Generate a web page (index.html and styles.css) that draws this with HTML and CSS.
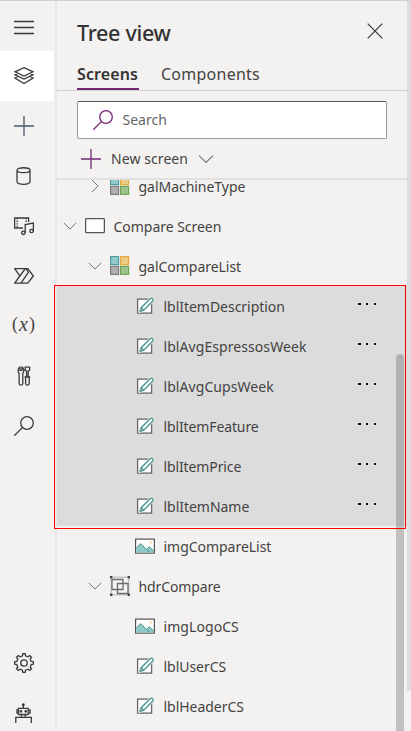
FILE: index.html
```html
<!DOCTYPE html>
<html lang="en">
<head>
<meta charset="utf-8">
<title>Tree view</title>
<link rel="stylesheet" href="styles.css">
</head>
<body>
<svg class="defs" width="0" height="0">
  <symbol id="label" viewBox="0 0 20 20">
    <rect x="2.6" y="3.1" width="14" height="14" fill="#fff" stroke="#666" stroke-width="1.3"/>
    <path d="M5.2 15.2 6.3 11.7 15.4 2.6Q16.7 1.7 17.9 2.9 18.7 4 17.8 5L8.7 14.1Z" fill="#fff" stroke="#eee" stroke-width="2.6"/>
    <path d="M5.2 15.2 6.3 11.7 15.4 2.6Q16.7 1.7 17.7 2.8 18.5 4 17.8 5L8.7 14.1ZM6.5 11.8 8.6 13.9" fill="#fff" stroke="#4b9692" stroke-width="1.3"/>
  </symbol>
  <symbol id="image" viewBox="0 0 20 20">
    <rect x=".6" y="3.1" width="18.8" height="14" fill="#fff" stroke="#555" stroke-width="1.2"/>
    <path d="M1.2 12.5 5.5 7.5 11.5 13.5 14.2 10.8 18.8 15V16.5H1.2Z" fill="#8ccac8"/>
    <path d="M1.2 12.5 5.5 7.5 14.5 16.5M11.5 13.5 14.2 10.8 18.8 15" fill="none" stroke="#4a8f8e"/>
    <rect x="15" y="5.5" width="1.3" height="2" fill="#e8b650"/>
  </symbol>
  <symbol id="gallery" viewBox="0 0 20 20">
    <g stroke-width="1.1">
    <rect x=".6" y=".6" width="8" height="8" fill="#90c9c9" stroke="#4a9797"/>
    <rect x="10.6" y=".6" width="8" height="8" fill="#eccb83" stroke="#e6a83b"/>
    <rect x=".6" y="10.4" width="8" height="8" fill="#b0b0b0" stroke="#777"/>
    <rect x="10.6" y="10.4" width="8" height="8" fill="#9fc38e" stroke="#68a04b"/>
    </g>
  </symbol>
  <symbol id="group" viewBox="0 0 20 20">
    <path d="M3 1.2H17M18.8 3V17M17 18.8H3M1.2 17V3" fill="none" stroke="#999" stroke-width=".7"/>
    <path d="M2 3.5H13V13.5H2ZM7.5 7.5H18V17.5H7.5Z" fill="none" stroke="#6c6c6c" stroke-width="1.3"/>
    <path d="M0 0H2.5V2.5H0ZM17.5 0H20V2.5H17.5ZM0 17.5H2.5V20H0ZM17.5 17.5H20V20H17.5Z" fill="#444"/>
  </symbol>
  <symbol id="down" viewBox="0 0 14 14"><path d="M.9 4 7 10 13.1 4" fill="none" stroke="#777" stroke-width="1"/></symbol>
  <symbol id="right" viewBox="0 0 14 14"><path d="M4 1 10 7 4 13" fill="none" stroke="#777" stroke-width="1"/></symbol>
  <symbol id="find" viewBox="0 0 20 20"><circle cx="13" cy="7" r="6.3"/><path d="M8.4 11.6.3 19.7"/></symbol>
  <symbol id="plus" viewBox="0 0 20 20"><path d="M0 10H20M10 0V20"/></symbol>
</svg>
<div class="app">
  <nav class="rail">
    <a class="item"><svg viewBox="0 0 20 20"><path d="M0 5.5H20M0 11.5H20M0 17.5H20"/></svg></a>
    <a class="item active"><svg viewBox="0 0 20 20"><path d="M10 1.6 19 5.8 10 10 1 5.8ZM3.8 7.4 1 8.8 10 13 19 8.8 16.2 7.4M3.8 10.5 1 12 10 17.5 19 12 16.2 10.5"/></svg></a>
    <a class="item"><svg class="steel"><use href="#plus"/></svg></a>
    <a class="item"><svg viewBox="0 0 20 20"><path d="M3 4.2C3 .9 16 .9 16 4.2V15.8C16 19.1 3 19.1 3 15.8ZM3 4.2C3 7.4 16 7.4 16 4.2"/></svg></a>
    <a class="item"><svg viewBox="0 0 20 20"><path d="M9 12H.6V2H14.6V6"/><path d="M3.2 2V12M12.2 2V6" stroke-dasharray="1.3 1.3"/><path d="M11.2 17V8.6L19.4 7V15"/><ellipse cx="9.4" cy="16.8" rx="1.8" ry="1.7"/><ellipse cx="17.6" cy="15" rx="1.8" ry="1.7"/></svg></a>
    <a class="item"><svg viewBox="0 0 20 20"><path d="M5.8 9.8.7 2.6H13.8L19.3 10 13.8 17.2H.7L11 3M5.8 9.8.7 17.2M7 17.2 14.5 6.2M12.2 3 14.8 7"/></svg></a>
    <a class="item variable">(<i>x</i>)</a>
    <a class="item"><svg viewBox="0 0 20 20"><path d="M5.1 7.2C3.5 5.8 3.7 2.2 6 1.2V4.4H8V1.2C10.3 2.2 10.4 5.8 8.8 7.2V17.5Q8.6 19.2 7 19.2 5.3 19.2 5.1 17.5ZM11.2 1.1H15.6V4.1L14.2 5V10.8H12.6V5L11.2 4.1ZM10.5 11H16.2M11.6 11V17.5Q11.7 19.2 13.4 19.2 15.1 19.2 15.2 17.5V11"/></svg></a>
    <a class="item"><svg><use href="#find"/></svg></a>
    <a class="item settings"><svg viewBox="0 0 20 20"><path d="M8.5 2.8 8.8.6 11.2.6 11.5 2.8 14 3.8 15.8 2.5 17.5 4.2 16.2 6 17.2 8.5 19.4 8.8V11.2L17.2 11.5 16.2 14 17.5 15.8 15.8 17.5 14 16.2 11.5 17.2 11.2 19.4H8.8L8.5 17.2 6 16.2 4.2 17.5 2.5 15.8 3.8 14 2.8 11.5.6 11.2V8.8L2.8 8.5 3.8 6 2.5 4.2 4.2 2.5 6 3.8Z"/><circle cx="10" cy="10" r="3.2"/></svg></a>
    <a class="item"><svg viewBox="0 0 20 20"><path d="M9.3 2V5.2M4.5 5.3H14.2V11.5H4.5ZM4 7H3V10H4M15 7H16V10H15M7.5 12V14.2M11.2 12V14.2M1.8 20V14.4H17.3V20"/><circle cx="9.3" cy="1.8" r=".8" fill="#333"/><circle cx="7" cy="8.3" r=".7" fill="#333"/><circle cx="11.7" cy="8.3" r=".7" fill="#333"/></svg></a>
  </nav>
  <main class="panel">
    <header class="head"><h1>Tree view</h1><svg class="close" viewBox="0 0 16 16"><path d="M.7.7 15.3 15.3M15.3.7.7 15.3"/></svg></header>
    <div class="tabs"><span class="tab current">Screens</span><span class="tab components">Components</span></div>
    <div class="search"><svg class="purple"><use href="#find"/></svg><span>Search</span></div>
    <div class="new"><svg class="purple"><use href="#plus"/></svg><span>New screen</span><svg class="chev"><use href="#down"/></svg></div>
    <div class="tree">
      <div class="row l2"><svg class="chev"><use href="#right"/></svg><svg class="ico"><use href="#gallery"/></svg><span>galMachineType</span></div>
      <div class="row l1"><svg class="chev"><use href="#down"/></svg><svg class="ico" viewBox="0 0 20 20"><rect x=".6" y="2.6" width="18.8" height="14" rx=".8" fill="#fff" stroke="#555" stroke-width="1.3"/></svg><span>Compare Screen</span></div>
      <div class="row l2"><svg class="chev"><use href="#down"/></svg><svg class="ico"><use href="#gallery"/></svg><span>galCompareList</span></div>
      <div class="selection">
        <div class="row l3"><svg class="ico"><use href="#label"/></svg><span>lblItemDescription</span><b class="more"><i></i><i></i><i></i></b></div>
        <div class="row l3"><svg class="ico"><use href="#label"/></svg><span class="loose">lblAvgEspressosWeek</span><b class="more"><i></i><i></i><i></i></b></div>
        <div class="row l3"><svg class="ico"><use href="#label"/></svg><span class="loose">lblAvgCupsWeek</span><b class="more"><i></i><i></i><i></i></b></div>
        <div class="row l3"><svg class="ico"><use href="#label"/></svg><span class="tight">lblItemFeature</span><b class="more"><i></i><i></i><i></i></b></div>
        <div class="row l3"><svg class="ico"><use href="#label"/></svg><span class="tight">lblItemPrice</span><b class="more"><i></i><i></i><i></i></b></div>
        <div class="row l3"><svg class="ico"><use href="#label"/></svg><span>lblItemName</span><b class="more"><i></i><i></i><i></i></b></div>
      </div>
      <div class="row l3"><svg class="ico"><use href="#image"/></svg><span>imgCompareList</span></div>
      <div class="row l2"><svg class="chev"><use href="#down"/></svg><svg class="ico"><use href="#group"/></svg><span class="tight">hdrCompare</span></div>
      <div class="row l3"><svg class="ico"><use href="#image"/></svg><span class="loose">imgLogoCS</span></div>
      <div class="row l3"><svg class="ico"><use href="#label"/></svg><span>lblUserCS</span></div>
      <div class="row l3"><svg class="ico"><use href="#label"/></svg><span>lblHeaderCS</span></div>
    </div>
    <div class="thumb"></div>
  </main>
  <aside class="edge"></aside>
  <div class="outline"></div>
</div>
</body>
</html>
```
FILE: styles.css
```css
* { box-sizing: border-box; }
body { margin: 0; overflow: hidden; font-family: "Noto Sans", "Open Sans", sans-serif; color: #444342; }
svg { display: block; flex: none; }
.defs { position: absolute; }
.app { position: relative; width: 411px; height: 731px; display: grid; grid-template-columns: 57px 350px 4px; background: #f3f2f1; border-top: 1px solid #d0d0d0; overflow: hidden; }
.rail { height: 730px; border-right: 2px solid #e8e8e8; display: flex; flex-direction: column; overflow: hidden; }
.item { height: 50px; width: 54px; flex: none; display: flex; align-items: center; padding-left: 14px; }
.item svg { width: 20px; height: 20px; fill: none; stroke: #3b3a39; stroke-width: 1.3; }
.item svg.steel { stroke: #46566a; }
.item.active { background: #fff; border-radius: 0 2px 2px 0; }
.item.variable { font: 18px "Liberation Serif", serif; padding-left: 12px; padding-bottom: 3px; letter-spacing: 1px; }
.item.variable i { font-size: 20px; }
.settings { margin-top: 187px; }
.panel { position: relative; height: 730px; display: flex; flex-direction: column; overflow: hidden; }
.head { height: 60px; padding: 0 24px 0 20px; display: flex; align-items: center; justify-content: space-between; }
h1 { margin: 0; font-size: 21.5px; line-height: 30px; font-weight: 500; letter-spacing: -.3px; padding-top: 4px; color: #333; }
.close { width: 16px; height: 16px; stroke: #3b3a39; stroke-width: 1.2; }
.tabs { height: 30px; display: flex; padding-left: 20px; border-bottom: 1px solid #d0d0d0; font-size: 16px; line-height: 27px; }
.tab { height: 29px; }
.current { width: 62px; font-weight: 600; letter-spacing: .1px; border-bottom: 2px solid #742774; color: #333; }
.components { margin-left: 22px; letter-spacing: .25px; }
.search { width: 310px; height: 38px; margin: 10px 0 0 19.5px; background: #fff; border: 1px solid #999; border-top-color: #555; border-radius: 2px; display: flex; align-items: center; padding-left: 15px; gap: 10px; font-size: 14px; color: #666; }
.search span { margin-top: -2px; }
.purple { width: 20px; height: 20px; fill: none; stroke: #742774; stroke-width: 1.3; }
.new { height: 41px; border-bottom: 2px solid #e0e0e0; display: flex; align-items: center; padding: 0 0 0 24px; gap: 10px; font-size: 14px; letter-spacing: .08px; }
.new .chev { width: 16px; height: 16px; }
.chev { width: 14px; height: 14px; }
.tree { height: 551px; overflow: hidden; font-size: 14px; line-height: 20px; }
.tree > .row:first-child { margin-top: -14px; }
.row { height: 40px; display: flex; align-items: center; white-space: nowrap; }
.row .ico { width: 20px; height: 20px; }
.row span { padding-top: 2px; letter-spacing: -.03px; }
.row .loose { letter-spacing: .07px; }
.row .tight { letter-spacing: -.12px; }
.l1 { padding-left: 6px; }
.l1 .ico { margin: 0 8.5px 0 8px; }
.l2 { padding-left: 31px; }
.l2 .ico { margin: 0 8.5px 0 8px; }
.l3 { padding-left: 78px; }
.l3 .ico { margin-right: 8.5px; }
.selection { background: #dcdcdc; }
.more { margin: 0 31px 4px auto; display: flex; gap: 5.5px; }
.more i { width: 2.2px; height: 2px; background: #000; }
.thumb { position: absolute; left: 339px; top: 353px; width: 8px; height: 400px; border-radius: 4px; background: rgba(90,90,90,.33); }
.edge { height: 689px; background: #dcdcdc; }
.outline { position: absolute; left: 54px; top: 284px; width: 352px; height: 244px; border: 1px solid #f00; }
```
